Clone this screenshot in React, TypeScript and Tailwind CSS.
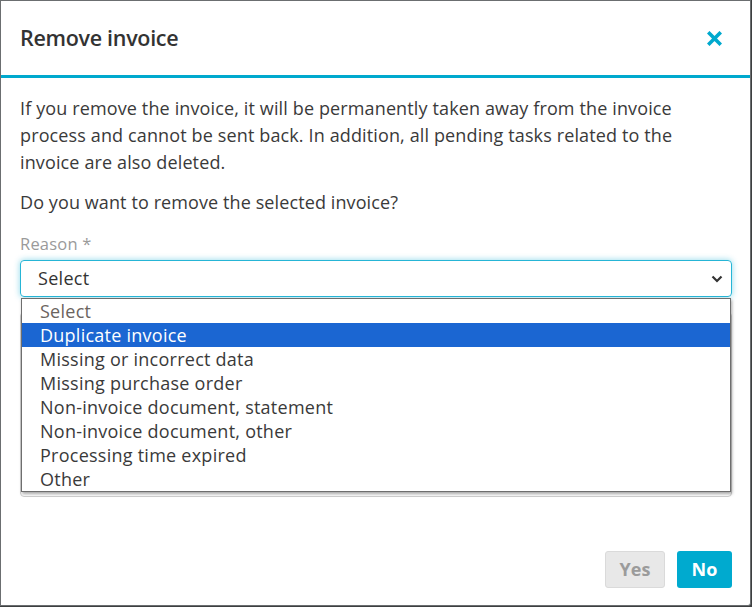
import React from "react";

const options = [
  "Select",
  "Duplicate invoice",
  "Missing or incorrect data",
  "Missing purchase order",
  "Non-invoice document, statement",
  "Non-invoice document, other",
  "Processing time expired",
  "Other",
];

export default function App() {
  return (
    <div
      className="w-[752px] h-[607px] bg-[#3d3f40] overflow-hidden"
      style={{ fontFamily: '"Open Sans", "Noto Sans", sans-serif' }}
    >
      <div className="w-[751px] h-[606px] bg-white border border-[#6b6e70] rounded-br-[3px] flex flex-col">
        <div className="h-[77px] shrink-0 flex items-center justify-between pl-[19px] pr-[28px] border-b-[3px] border-[#00a9ce]">
          <h2 className="text-[21.5px] font-semibold text-[#333] tracking-[-0.3px]">Remove invoice</h2>
          <svg width="15" height="15" viewBox="0 0 15 15" className="mt-[1px]">
            <path d="M2.5 2.5 L12.5 12.5 M12.5 2.5 L2.5 12.5" stroke="#00a9ce" strokeWidth="3.6" strokeLinecap="square" />
          </svg>
        </div>
        <div className="flex-1 flex flex-col pl-[19px] pr-[18px] pt-[17px] pb-[17px] text-[#3a3a3a]">
          <p className="text-[18px] leading-[27px] tracking-[0.13px]">
            If you remove the invoice, it will be permanently taken away from the invoice process and cannot be sent back. In addition, all pending tasks related to the invoice are also deleted.
          </p>
          <p className="text-[18px] leading-[27px] tracking-[0.1px] mt-[13px]">Do you want to remove the selected invoice?</p>
          <label className="text-[16.5px] leading-[22px] tracking-[0.2px] text-[#9a9a9a] mt-[17px]">Reason *</label>
          <div className="relative mt-[5px]">
            <div className="h-[37px] rounded-[4px] border border-[#26b5d6] shadow-[0_0_6px_rgba(0,169,206,0.45)] flex items-center justify-between pl-[17px] pr-[8px]">
              <span className="text-[18px] tracking-[0.3px] text-[#333]">Select</span>
              <svg width="12" height="8" viewBox="0 0 12 8">
                <path d="M1.5 1.5 L6 6 L10.5 1.5" stroke="#333" strokeWidth="2.2" fill="none" />
              </svg>
            </div>
            <div className="mt-[15px] h-[185px] rounded-[4px] border border-[#cfcfcf]" />
            <ul className="absolute left-[1px] right-[1px] top-[38px] bg-white border border-[#6e6e6e] shadow-[1px_2px_3px_rgba(0,0,0,0.35)]">
              {options.map((o, i) => (
                <li
                  key={o}
                  className={
                    "h-[24px] leading-[24px] pl-[18px] text-[18px] tracking-[0.25px] " +
                    (i === 1 ? "bg-[#1b66d2] text-white" : i === 0 ? "text-[#6b6460]" : "text-[#3a3a3a]")
                  }
                >
                  {o}
                </li>
              ))}
            </ul>
          </div>
          <div className="mt-auto flex justify-end gap-[12px]">
            <button className="h-[37px] w-[60px] rounded-[3px] bg-[#e8e8e8] border border-[#dadada] text-[#9b9b9b] text-[18px] font-bold">
              Yes
            </button>
            <button className="h-[37px] w-[55px] rounded-[3px] bg-[#00aacf] text-white text-[18px] font-bold">
              No
            </button>
          </div>
        </div>
      </div>
    </div>
  );
}
